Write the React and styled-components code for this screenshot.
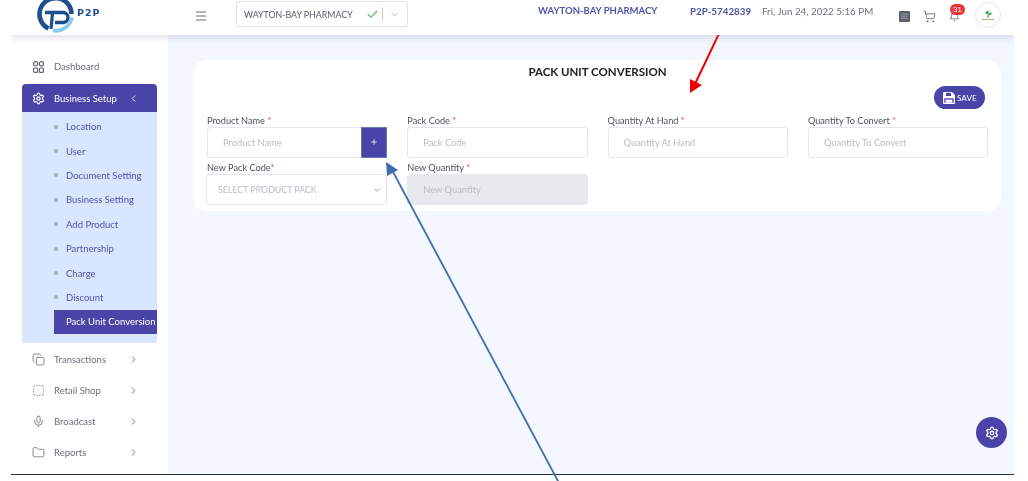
import React from 'react'
import styled, { createGlobalStyle } from 'styled-components'
import {
  Menu, Check, ChevronDown, ChevronLeft, ChevronRight, Settings, Copy, SquareDashed,
  Mic, Folder, ShoppingCart, Bell, Plus,
} from 'lucide-react'

const GlobalStyle = createGlobalStyle`
  html, body { margin: 0; padding: 0; background: #fff; }
  body { font-family: Lato, "Open Sans", sans-serif; }
  * { box-sizing: border-box; }
`

const subItems = ['Location', 'User', 'Document Setting', 'Business Setting', 'Add Product', 'Partnership', 'Charge', 'Discount']

const lowerItems = [
  { label: 'Transactions', icon: Copy },
  { label: 'Retail Shop', icon: SquareDashed },
  { label: 'Broadcast', icon: Mic },
  { label: 'Reports', icon: Folder },
]

const DashIcon = () => (
  <svg width="11" height="12" viewBox="0 0 11 12" fill="none" stroke="#5f646c" strokeWidth="1.2">
    <rect x="0.6" y="0.6" width="4" height="4.4" rx="2" />
    <rect x="6.4" y="0.6" width="4" height="4.4" rx="2" />
    <rect x="0.6" y="7" width="4" height="4.4" rx="1" />
    <rect x="6.4" y="7" width="4" height="4.4" rx="1" />
  </svg>
)

const LedgerIcon = () => (
  <svg width="11" height="11" viewBox="0 0 11 11">
    <rect width="11" height="11" rx="1" fill="#5b6068" />
    <path d="M2 3h7M2 5.2h7M2 7.4h7" stroke="#aeb2b8" strokeWidth="0.8" />
  </svg>
)

const FloppyIcon = () => (
  <svg width="12" height="12" viewBox="0 0 12 12">
    <path d="M1 0h8l3 3v8a1 1 0 0 1-1 1H1a1 1 0 0 1-1-1V1a1 1 0 0 1 1-1z" fill="#fff" />
    <rect x="1.3" y="6.3" width="9.4" height="4.4" fill="#4b44a8" />
    <rect x="2.6" y="7.6" width="6.8" height="3.1" fill="#fff" />
    <rect x="3" y="0.8" width="5" height="3.2" fill="#4b44a8" />
  </svg>
)

const Logo = () => (
  <svg width="38" height="38" viewBox="0 0 38 38" fill="none">
    <path d="M11.5 33.5A16 16 0 1 1 34.5 19" stroke="#1d4f8c" strokeWidth="4.6" />
    <path d="M16 35.5a16.5 16.5 0 0 0 19-13" stroke="#8cc9f2" strokeWidth="3.8" />
    <path d="M8 17.5h18a5 5 0 0 1 0 10h-8" stroke="#1d4f8c" strokeWidth="3.4" />
    <path d="M15.5 18l-1.5 16" stroke="#1d4f8c" strokeWidth="3.2" />
  </svg>
)

const Field = ({ label, placeholder, disabled, tight, children }) => (
  <FieldBox>
    <FieldLabel>{label}{tight ? '' : ' '}<Star>*</Star></FieldLabel>
    {children || <TextInput placeholder={placeholder} disabled={disabled} />}
  </FieldBox>
)

const App = () => {
  return (
    <Page>
      <GlobalStyle />
      <Frame>
        <Header>
          <Brand>
            <Logo />
            <BrandName>P2P</BrandName>
          </Brand>
          <MenuBtn><Menu size={14} strokeWidth={1.8} /></MenuBtn>
          <OrgSelect>
            <OrgName>WAYTON-BAY PHARMACY</OrgName>
            <Check size={13} color="#58b368" strokeWidth={2} />
            <Divider />
            <ChevronDown size={11} color="#b5b8bd" />
          </OrgSelect>
          <OrgTitle>WAYTON-BAY PHARMACY</OrgTitle>
          <OrgCode>P2P-5742839</OrgCode>
          <DateText>Fri, Jun 24, 2022 5:16 PM</DateText>
          <HeadIcons>
            <LedgerIcon />
            <ShoppingCart size={13} color="#5b6068" strokeWidth={1.5} />
            <BellWrap>
              <Bell size={11} color="#5b6068" strokeWidth={1.8} />
              <Badge>31</Badge>
            </BellWrap>
          </HeadIcons>
          <Avatar>
            <svg width="16" height="11" viewBox="0 0 16 11">
              <path d="M8 0.5c1 1 1 2.5 0 4-1.5-.5-2.5-1.5-3-2.5 1 0 2 0 3-1.5z" fill="#2f9e4f" />
              <path d="M8 4.5c1-1.5 2.5-2 4-1.5-.5 1.5-2 2.5-4 2.5z" fill="#3aa655" />
              <path d="M8 5c-1 1-1 2 0 3 1-1 1-2 0-3z" fill="#2f9e4f" />
              <path d="M2 9.5h12" stroke="#9cc47c" strokeWidth="1" />
            </svg>
          </Avatar>
        </Header>
        <Body>
          <Sidebar>
            <NavRow $first>
              <NavIcon><DashIcon /></NavIcon>
              <NavLabel>Dashboard</NavLabel>
            </NavRow>
            <NavHead>
              <NavIcon><Settings size={13} strokeWidth={2.2} /></NavIcon>
              <NavLabel>Business Setup</NavLabel>
              <ChevronLeft size={11} strokeWidth={1.8} />
            </NavHead>
            <SubMenu>
              {subItems.map((s) => (
                <SubItem key={s}><Dot />{s}</SubItem>
              ))}
              <SubActive>Pack Unit Conversion</SubActive>
            </SubMenu>
            <LowerNav>
              {lowerItems.map(({ label, icon: Icon }) => (
                <NavRow key={label}>
                  <NavIcon><Icon size={13} strokeWidth={1.5} /></NavIcon>
                  <NavLabel>{label}</NavLabel>
                  <ChevronRight size={11} />
                </NavRow>
              ))}
            </LowerNav>
          </Sidebar>
          <Main>
            <Card>
              <Title>PACK UNIT CONVERSION</Title>
              <SaveRow>
                <SaveBtn><FloppyIcon />SAVE</SaveBtn>
              </SaveRow>
              <FormGrid>
                <Field label="Product Name">
                  <InputGroup>
                    <GroupInput placeholder="Product Name" />
                    <AddBtn><Plus size={8} strokeWidth={2.5} /></AddBtn>
                  </InputGroup>
                </Field>
                <Field label="Pack Code" placeholder="Pack Code" />
                <Field label="Quantity At Hand" placeholder="Quantity At Hand" />
                <Field label="Quantity To Convert" placeholder="Quantity To Convert" />
                <Field label="New Pack Code" tight>
                  <SelectBox>
                    SELECT PRODUCT PACK
                    <ChevronDown size={10} color="#8d9197" />
                  </SelectBox>
                </Field>
                <Field label="New Quantity" placeholder="New Quantity" disabled />
              </FormGrid>
            </Card>
          </Main>
        </Body>
        <Fab><Settings size={14} strokeWidth={2.2} /></Fab>
      </Frame>
      <Arrows width="1028" height="481" viewBox="0 0 1028 481">
        <path d="M735.5 -1L695 84" stroke="#f00000" strokeWidth="2" />
        <path d="M690 93L690 79L702 85Z" fill="#f00000" />
        <path d="M558.5 482L392 170" stroke="#3f6fb0" strokeWidth="1.8" />
        <path d="M386 162L387 176L398 170Z" fill="#3f6fb0" />
      </Arrows>
    </Page>
  )
}

export default App

const Page = styled.div`
  position: relative;
  width: 1028px;
  height: 481px;
  overflow: hidden;
  background: #fff;
  padding-left: 11px;
  filter: blur(0.4px);
`

const Frame = styled.div`
  position: relative;
  width: 1003px;
  height: 474.5px;
  display: flex;
  flex-direction: column;
  border-bottom: 1.5px solid #2b3242;
  background: #f4f7fe;
  overflow: hidden;
`

const Header = styled.header`
  position: relative;
  z-index: 2;
  flex: 0 0 35px;
  display: flex;
  align-items: flex-start;
  padding-left: 26px;
  background: #fff;
  box-shadow: 0 2px 8px rgba(120, 125, 160, 0.28);
`

const Brand = styled.div`
  display: flex;
  align-items: flex-start;
  width: 71px;
  margin-top: -5px;
`

const BrandName = styled.span`
  margin: 12px 0 0 2px;
  font-family: "DejaVu Sans", sans-serif;
  font-size: 9.5px;
  font-weight: 700;
  letter-spacing: 1px;
  color: #1d4f8c;
`

const MenuBtn = styled.div`
  display: flex;
  width: 42px;
  margin: 9px 0 0 86px;
  color: #6a6e74;
`

const OrgSelect = styled.div`
  display: flex;
  align-items: center;
  width: 172px;
  height: 26px;
  margin: 1px 0 0 0;
  padding: 0 6px 0 7px;
  background: #fff;
  border: 1px solid #dfe1e6;
  border-radius: 3px;
`

const OrgName = styled.span`
  width: 122px;
  font-size: 8.8px;
  white-space: nowrap;
  color: #555a62;
`

const Divider = styled.span`
  width: 1px;
  height: 14px;
  margin: 0 6px 0 3px;
  background: #cfd2d6;
`

const OrgTitle = styled.span`
  margin: 5px 0 0 130px;
  width: 152px;
  font-size: 9.5px;
  font-weight: 700;
  white-space: nowrap;
  color: #4f56a8;
`

const OrgCode = styled(OrgTitle)`
  margin-left: 0;
  width: 72px;
  font-size: 9.8px;
`

const DateText = styled.span`
  width: 134px;
  margin-top: 5px;
  font-size: 9.8px;
  white-space: nowrap;
  color: #6e7278;
`

const HeadIcons = styled.div`
  display: flex;
  align-items: center;
  gap: 13px;
  width: 76px;
  margin: 10px 0 0 3px;
`

const BellWrap = styled.div`
  position: relative;
  display: flex;
`

const Badge = styled.span`
  position: absolute;
  top: -7px;
  left: 1px;
  min-width: 15px;
  height: 11px;
  line-height: 11px;
  border-radius: 6px;
  text-align: center;
  font-family: "Liberation Sans", sans-serif;
  font-size: 8px;
  color: #fff;
  background: #ee3438;
`

const Avatar = styled.div`
  display: flex;
  align-items: center;
  justify-content: center;
  width: 26px;
  height: 26px;
  margin-top: 2px;
  background: #fff;
  border: 1px solid #dde6f8;
  border-radius: 50%;
`

const Body = styled.div`
  flex: 1;
  display: flex;
  min-height: 0;
`

const Sidebar = styled.aside`
  flex: 0 0 157px;
  min-width: 0;
  padding: 17.5px 11px 0;
  background: #fff;
`

const NavRow = styled.div`
  display: flex;
  align-items: center;
  height: ${(p) => (p.$first ? '28.5px' : '31.2px')};
  margin-bottom: ${(p) => (p.$first ? '3px' : '0')};
  padding-left: 10px;
  font-size: 9.5px;
  color: #6b7078;
`

const NavHead = styled(NavRow)`
  height: 28px;
  margin-bottom: 0;
  color: #fff;
  background: #4b44a8;
  border-radius: 4px 4px 0 0;
`

const NavIcon = styled.span`
  display: flex;
  justify-content: center;
  width: 13px;
  margin-right: 9px;
`

const NavLabel = styled.span`
  width: 74px;
  white-space: nowrap;
`

const SubMenu = styled.div`
  height: 231px;
  padding: 2.5px 0 0 32px;
  background: #d9e6ff;
`

const LowerNav = styled.div`
  padding-top: 0.5px;
`

const SubItem = styled.div`
  display: flex;
  align-items: center;
  height: 24.4px;
  font-size: 9.5px;
  white-space: nowrap;
  color: #5450ab;
`

const Dot = styled.span`
  width: 4px;
  height: 4px;
  margin-right: 8px;
  border-radius: 50%;
  background: #a9adb3;
`

const SubActive = styled(SubItem)`
  padding-left: 12px;
  color: #fff;
  background: #4b44a8;
`

const Main = styled.main`
  flex: 1;
  min-width: 0;
  padding: 25px 13px 0 25px;
`

const Card = styled.section`
  height: 151px;
  padding: 5px 13px 0 14px;
  background: #fff;
  border-radius: 14px;
`

const Title = styled.h1`
  margin: 0;
  text-align: center;
  font-size: 11.5px;
  line-height: 14px;
  font-weight: 700;
  color: #1c1d22;
`

const SaveRow = styled.div`
  display: flex;
  justify-content: flex-end;
  height: 34px;
  padding: 7px 3px 0 0;
`

const SaveBtn = styled.div`
  display: flex;
  align-items: center;
  gap: 2px;
  width: 51px;
  height: 23px;
  padding-left: 9px;
  font-size: 8.2px;
  color: #fff;
  background: #4b44a8;
  border-radius: 12px;
`

const FormGrid = styled.div`
  display: grid;
  grid-template-columns: repeat(4, 180.3px);
  column-gap: 20px;
  row-gap: 2.5px;
`

const FieldBox = styled.div`
  display: flex;
  flex-direction: column;
`

const FieldLabel = styled.label`
  height: 14px;
  line-height: 15px;
  font-size: 9.2px;
  white-space: nowrap;
  color: #4e5259;
`

const Star = styled.span`
  color: #ee4b4b;
`

const TextInput = styled.input`
  width: 100%;
  height: 30.5px;
  padding: 0 15px;
  font-family: inherit;
  font-size: 9.3px;
  background: ${(p) => (p.disabled ? '#e7e9ec' : '#fff')};
  border: 1px solid ${(p) => (p.disabled ? '#e7e9ec' : '#e4e6ea')};
  border-radius: 3px;
  outline: none;

  &::placeholder {
    color: #b9bcc1;
    opacity: 1;
  }
`

const InputGroup = styled.div`
  display: flex;
  height: 30.5px;
`

const GroupInput = styled(TextInput)`
  flex: 1;
  min-width: 0;
  border-right: 0;
  border-radius: 3px 0 0 3px;
`

const AddBtn = styled.div`
  display: flex;
  align-items: center;
  justify-content: center;
  flex: 0 0 26px;
  color: #fff;
  background: #4b44a8;
  border: 1px solid #6a78b0;
`

const SelectBox = styled.div`
  display: flex;
  align-items: center;
  justify-content: space-between;
  height: 31px;
  margin-left: -1px;
  padding: 0 4px 0 11px;
  font-size: 8.8px;
  white-space: nowrap;
  color: #b9bcc1;
  background: #fff;
  border: 1px solid #e4e6ea;
  border-radius: 3px;
`

const Fab = styled.div`
  position: absolute;
  top: 417px;
  left: 965px;
  display: flex;
  align-items: center;
  justify-content: center;
  width: 31px;
  height: 31px;
  color: #fff;
  background: #4b44a8;
  border-radius: 50%;
`

const Arrows = styled.svg`
  position: absolute;
  top: 0;
  left: 0;
  pointer-events: none;
`
